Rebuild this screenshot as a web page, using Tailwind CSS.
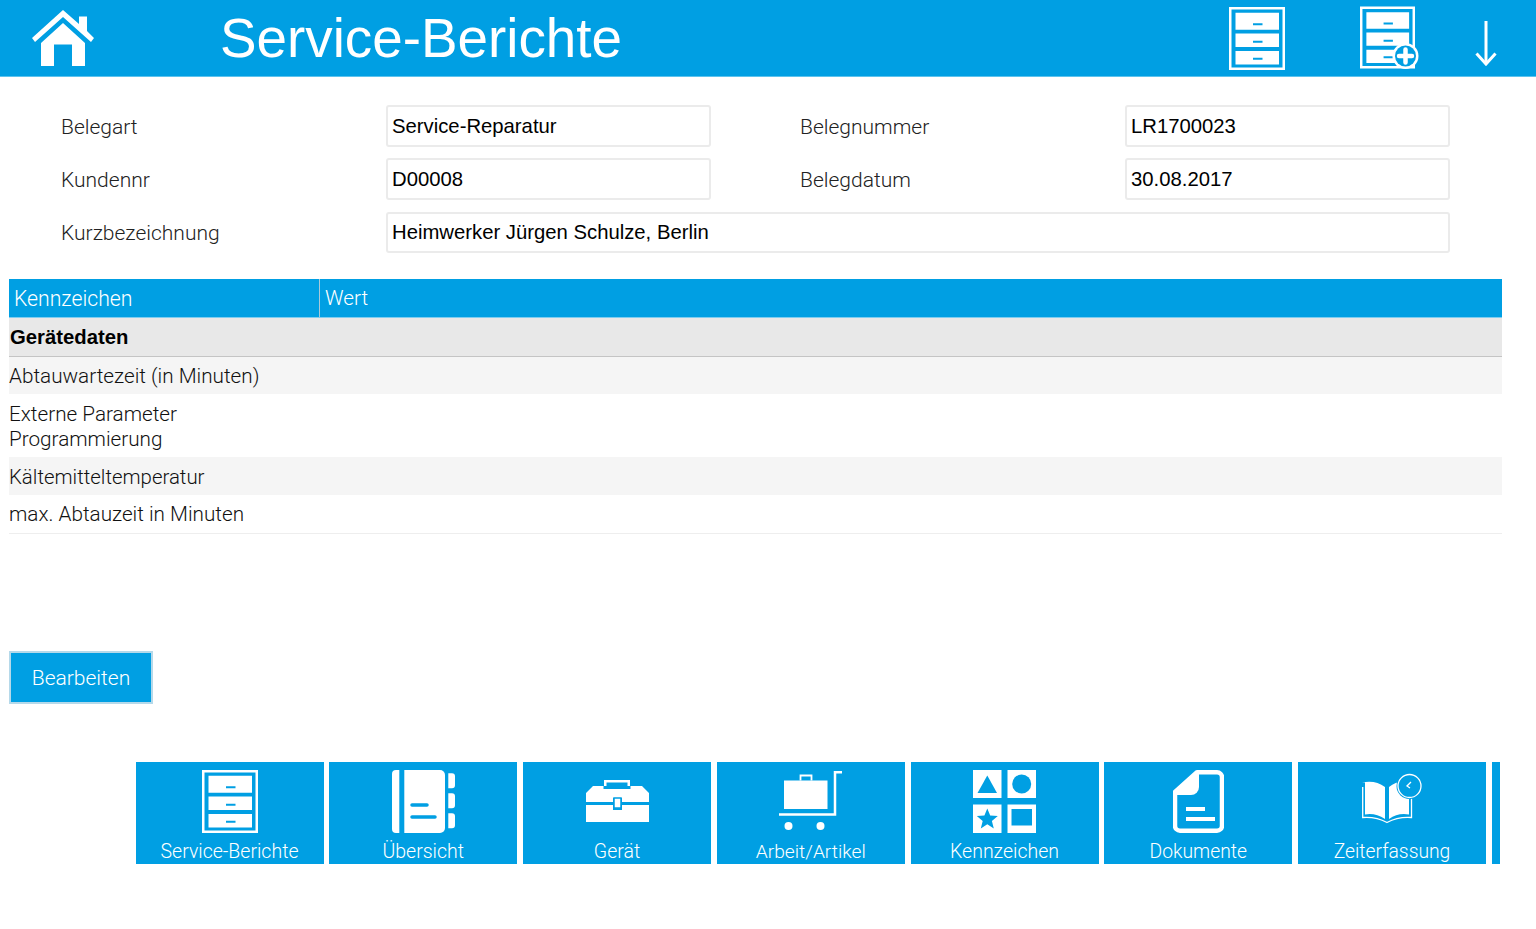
<!DOCTYPE html>
<html lang="de">
<head>
    <meta charset="UTF-8">
    <meta name="viewport" content="width=device-width, initial-scale=1.0">
    <title>Service-Berichte</title>
    <script src="https://cdn.jsdelivr.net/npm/@tailwindcss/browser@4"></script>
</head>
<body class="bg-white font-['Liberation_Sans',sans-serif] text-black overflow-hidden">
    <svg class="hidden">
        <symbol id="cabinet" viewBox="0 0 56 63">
            <path fill="#fff" fill-rule="evenodd" d="M0 0h56v63H0z M2.500 2.500v58h51v-58z"/>
            <path fill="#fff" d="M6.500 5.700h43.500v17H6.500z M6.500 26.500h43.500v13.500H6.500z M6.500 44h43.500v13.500H6.500z"/>
            <path stroke="#009fe3" stroke-width="2" d="M24 17.300h9.500 M24 34.700h9.500 M24 51.700h9.500"/>
        </symbol>
    </svg>

    <!-- Kopfzeile -->
    <header class="h-[77px] bg-[#009fe3] border-b border-[#5cc3ee] flex items-center relative">
        <div class="w-[220px] pl-[32px] shrink-0">
            <svg class="w-[62px] h-[56px]" viewBox="0 0 62 56" fill="#fff">
                <path d="M31 0 47 14V6.500h8V21L62 28 59 32 31 7 3 32 0 28z"/>
                <path d="M9 33 31 13 53 33V56H40V34.500H22V56H9z"/>
            </svg>
        </div>
        <h1 class="text-[54.800px] leading-none text-white flex-1 pt-[1px]">Service-Berichte</h1>
        <div class="flex items-center">
            <svg class="w-[56px] h-[63px] mr-[75px]"><use href="#cabinet"/></svg>
            <svg class="w-[60px] h-[64px] mr-[55px]" viewBox="0 0 60 64">
                <use href="#cabinet" width="55" height="63"/>
                <circle cx="45.500" cy="50" r="13" fill="#fff"/>
                <circle cx="45.500" cy="50" r="10.500" fill="#009fe3"/>
                <path stroke="#fff" stroke-width="4.500" stroke-linecap="round" d="M45.500 43.500v13 M39 50h13"/>
            </svg>
            <svg class="w-[22px] h-[46px] mr-[39px] mt-[9px]" viewBox="0 0 22 46" fill="none" stroke="#fff" stroke-width="3">
                <path d="M11 1v43"/>
                <path d="M1.500 33.500 11 44l9.500-10.500"/>
            </svg>
        </div>
    </header>

    <!-- Belegkopf -->
    <section class="pt-[28px] pl-[61px] w-[1450px] grid grid-cols-[325px_325px_89px_325px_325px] gap-y-[11px] text-[20.300px] text-[#222]">
        <label class="self-center font-['Roboto'] font-light text-[21px] pt-[4px]">Belegart</label>
        <div class="border-2 border-[#ebebeb] rounded-[3px] h-[42px] bg-white pl-[4px] flex items-center text-black">Service-Reparatur</div>
        <span></span>
        <label class="self-center font-['Roboto'] font-light text-[21px] pt-[4px]">Belegnummer</label>
        <div class="border-2 border-[#ebebeb] rounded-[3px] h-[42px] bg-white pl-[4px] flex items-center text-black">LR1700023</div>

        <label class="self-center font-['Roboto'] font-light text-[21px] pt-[4px]">Kundennr</label>
        <div class="border-2 border-[#ebebeb] rounded-[3px] h-[42px] bg-white pl-[4px] flex items-center text-black">D00008</div>
        <span></span>
        <label class="self-center font-['Roboto'] font-light text-[21px] pt-[4px]">Belegdatum</label>
        <div class="border-2 border-[#ebebeb] rounded-[3px] h-[42px] bg-white pl-[4px] flex items-center text-black">30.08.2017</div>

        <label class="self-center font-['Roboto'] font-light text-[21px] pt-[4px]">Kurzbezeichnung</label>
        <div class="col-span-4 mt-px border-2 border-[#ebebeb] rounded-[3px] h-[41px] bg-white pl-[4px] flex items-center text-black">Heimwerker Jürgen Schulze, Berlin</div>
    </section>

    <!-- Tabelle -->
    <section class="mt-[26px] ml-[9px] w-[1493px] text-[20.700px] leading-[25px] font-['Roboto'] font-light text-[#111]">
        <div class="flex h-[39px] bg-[#009fe3] text-white border-b border-[#7fcdf0]">
            <div class="w-[311px] pl-[5px] flex items-center border-r border-[#a9c9d8] text-[21.200px]">Kennzeichen</div>
            <div class="pl-[5px] flex items-center">Wert</div>
        </div>
        <div class="h-[39px] bg-[#e8e8e8] border-b border-[#c4c4c4] flex items-center pl-px font-['Liberation_Sans'] text-[20.300px] font-bold text-black">Gerätedaten</div>
        <div class="h-[37px] bg-[#f5f5f5] flex items-center pt-[2px]">Abtauwartezeit (in Minuten)</div>
        <div class="h-[63px] flex items-center pt-[2px]">Externe Parameter<br>Programmierung</div>
        <div class="h-[38px] bg-[#f5f5f5] flex items-center pt-[2px] text-[20.400px]">Kältemitteltemperatur</div>
        <div class="h-[39px] border-b border-[#eeeeee] flex items-center pt-px">max. Abtauzeit in Minuten</div>
    </section>

    <div class="mt-[117px] ml-[9px]">
        <button class="w-[144px] h-[53px] bg-[#009fe3] border-2 border-[#b5d9ea] text-white text-[21px] font-['Roboto'] font-light pt-[2px]">Bearbeiten</button>
    </div>

    <!-- Kacheln -->
    <nav class="mt-[58px] ml-[135.500px] flex gap-[5.750px] h-[102px]">
        <a class="w-[188px] bg-[#009fe3] flex flex-col items-center text-white">
            <svg class="w-[56px] h-[63px] mt-[8px]"><use href="#cabinet"/></svg>
            <span class="mt-[7px] text-[19.500px] leading-[24px] font-['Roboto'] font-light">Service-Berichte</span>
        </a>
        <a class="w-[188px] bg-[#009fe3] flex flex-col items-center text-white">
            <svg class="w-[63px] h-[63px] mt-[8px]" viewBox="0 0 63 63" fill="#fff">
                <path d="M4 0h3.300v63H4a4 4 0 0 1-4-4V4a4 4 0 0 1 4-4z"/>
                <path d="M12.300 0H48a5 5 0 0 1 5 5v53a5 5 0 0 1-5 5H12.300z"/>
                <path d="M56.300 3.300H60a3 3 0 0 1 3 3v9a3 3 0 0 1-3 3h-3.700z M56.300 23.300H60a3 3 0 0 1 3 3v9a3 3 0 0 1-3 3h-3.700z M56.300 43.300H60a3 3 0 0 1 3 3v9a3 3 0 0 1-3 3h-3.700z"/>
                <path stroke="#009fe3" stroke-width="3.500" stroke-linecap="round" d="M20 35h15 M20 47h23"/>
            </svg>
            <span class="mt-[7px] text-[19.500px] leading-[24px] font-['Roboto'] font-light">Übersicht</span>
        </a>
        <a class="w-[188px] bg-[#009fe3] flex flex-col items-center text-white">
            <svg class="w-[63px] h-[43px] mt-[18px]" viewBox="0 0 63 43" fill="#fff">
                <path fill-rule="evenodd" d="M18 0h26v6h-2.500V2.500h-21V6H18z"/>
                <path d="M7 6h10.500v3h27V6H56l7 7v9H36v-4h-9v4H0v-9z"/>
                <path d="M0 25h27v5h9v-5h27v17H0z"/>
                <path fill="#fff" stroke="#009fe3" stroke-width="1.500" d="M28 18h7v10h-7z"/>
            </svg>
            <span class="mt-[17px] text-[19.500px] leading-[24px] font-['Roboto'] font-light">Gerät</span>
        </a>
        <a class="w-[188px] bg-[#009fe3] flex flex-col items-center text-white">
            <svg class="w-[63px] h-[60px] mt-[9px]" viewBox="0 0 63 60" fill="#fff">
                <path d="M5 9.500h43.500V38H5z"/>
                <path fill="none" stroke="#fff" stroke-width="1.800" d="M21.500 9.500V4.500h11v5"/>
                <path fill="none" stroke="#fff" stroke-width="2.500" d="M0 43.500h56V1.300h7"/>
                <circle cx="9.500" cy="55" r="4"/>
                <circle cx="41.500" cy="55" r="4"/>
            </svg>
            <span class="mt-[9px] text-[19.200px] leading-[24px] font-['Roboto'] font-light">Arbeit/Artikel</span>
        </a>
        <a class="w-[188px] bg-[#009fe3] flex flex-col items-center text-white">
            <svg class="w-[63px] h-[63px] mt-[8px]" viewBox="0 0 63 63">
                <path fill="#fff" d="M0 0h28.500v28H0z M34.500 0H63v28H34.500z M0 34.500h28.500V63H0z M34.500 34.500H63V63H34.500z"/>
                <path fill="#009fe3" d="M14.300 5.500 24 23H4.500z"/>
                <circle cx="48.700" cy="14" r="9.500" fill="#009fe3"/>
                <path fill="#009fe3" d="M14.300 38.500 17.200 45.600 24.800 46.100 18.900 51 20.800 58.400 14.300 54.300 7.800 58.400 9.700 51 3.800 46.100 11.400 45.600z"/>
                <path fill="#009fe3" d="M38.500 39h20.500v16.500H38.500z"/>
            </svg>
            <span class="mt-[7px] text-[19.500px] leading-[24px] font-['Roboto'] font-light">Kennzeichen</span>
        </a>
        <a class="w-[188px] bg-[#009fe3] flex flex-col items-center text-white">
            <svg class="w-[51px] h-[63px] mt-[8px]" viewBox="0 0 51 63">
                <path fill="none" stroke="#fff" stroke-width="4.500" stroke-linejoin="round" d="M24 2.300H44a5 5 0 0 1 5 5V55.700a5 5 0 0 1-5 5H7a5 5 0 0 1-5-5V22z"/>
                <path fill="#fff" d="M22 2 2 22v3h16a8 8 0 0 0 8-8V2z"/>
                <path fill="#fff" d="M13 37h19v4H13z M13 47h29v4H13z"/>
            </svg>
            <span class="mt-[7px] text-[19.300px] leading-[24px] font-['Roboto'] font-light">Dokumente</span>
        </a>
        <a class="w-[188px] bg-[#009fe3] flex flex-col items-center text-white relative">
            <svg class="absolute left-[64px] top-[11px] w-[62px] h-[56px]" viewBox="0 0 62 56">
                <path fill="#fff" d="M0 9.500Q13 6.500 23 14V46Q13 39.500 3 41.500V9.500z"/>
                <path fill="#fff" d="M27 14Q36 6.500 47 9.500V41.500Q36 39.500 27 46z"/>
                <path fill="none" stroke="#fff" stroke-width="1.300" d="M0.700 14V44.500Q14 43.500 25 49.500Q36 43.500 49.500 44.500V24"/>
                <circle cx="47.500" cy="13" r="13" fill="#009fe3"/>
                <circle cx="47.500" cy="13" r="11.500" fill="#009fe3" stroke="#fff" stroke-width="1.300"/>
                <path fill="none" stroke="#fff" stroke-width="1.300" d="M49 9 45 13l3 2"/>
            </svg>
            <span class="mt-[78px] text-[19.300px] leading-[24px] font-['Roboto'] font-light">Zeiterfassung</span>
        </a>
        <a class="w-[8px] bg-[#009fe3]"></a>
    </nav>
</body>
</html>
